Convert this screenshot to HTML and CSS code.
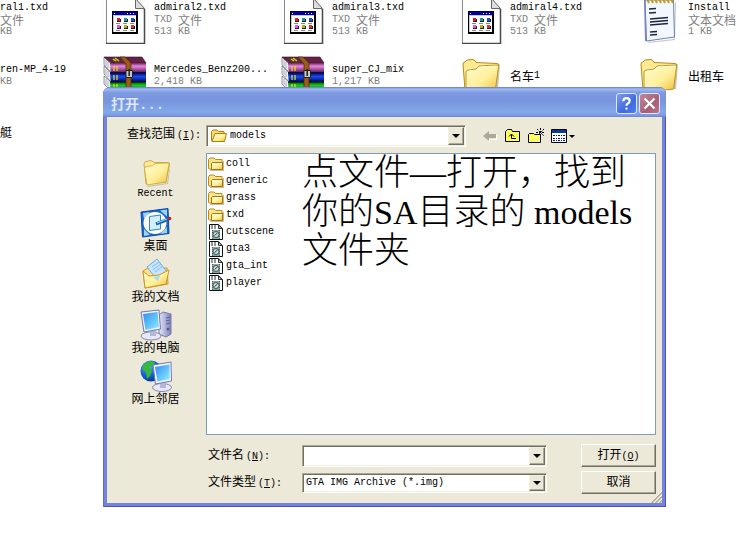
FILE: index.html
```html
<!DOCTYPE html>
<html lang="zh-CN">
<head>
<meta charset="utf-8">
<title>打开...</title>
<link rel="stylesheet" href="styles.css">
</head>
<body>
<svg class="sprite" aria-hidden="true">
  <defs>
    <linearGradient id="gold" x1="0" y1="0" x2="1" y2="1"><stop offset="0" stop-color="#fffbd0"/><stop offset=".55" stop-color="#fff09a"/><stop offset="1" stop-color="#f0bd38"/></linearGradient>
    <linearGradient id="screen" x1="0" y1="0" x2="1" y2="1"><stop offset="0" stop-color="#2f8cf0"/><stop offset="1" stop-color="#8ff0ff"/></linearGradient>
    <linearGradient id="purple" x1="0" y1="0" x2="0" y2="1"><stop offset="0" stop-color="#70205f"/><stop offset=".35" stop-color="#e68be0"/><stop offset="1" stop-color="#69205f"/></linearGradient>
    <linearGradient id="blue" x1="0" y1="0" x2="0" y2="1"><stop offset="0" stop-color="#000070"/><stop offset=".4" stop-color="#1550f0"/><stop offset="1" stop-color="#000058"/></linearGradient>
    <linearGradient id="green" x1="0" y1="0" x2="0" y2="1"><stop offset="0" stop-color="#005500"/><stop offset=".4" stop-color="#16d020"/><stop offset="1" stop-color="#004800"/></linearGradient>
    <linearGradient id="tower" x1="0" y1="0" x2="1" y2="0"><stop offset="0" stop-color="#e6e8fa"/><stop offset="1" stop-color="#7d80b8"/></linearGradient>
    <radialGradient id="globe" cx=".35" cy=".3" r=".8"><stop offset="0" stop-color="#66baff"/><stop offset=".5" stop-color="#1463d8"/><stop offset="1" stop-color="#062a80"/></radialGradient>
  </defs>
  <symbol id="i-txd" viewBox="0 0 48 48">
    <path fill="#fcfcfc" d="M0 0h48v48H0z"/>
    <path fill="#fff" stroke="#8a8a8a" d="M5.500 0V47.500H43.500V14L34 3V0z"/>
    <path fill="none" stroke="#4a4a4a" stroke-width="1.500" d="M5 47.500H43.500V13"/>
    <path fill="#ddd" stroke="#666" d="M34.500 2.500V12.500H43.500z"/>
    <path fill="#000" d="M11 15h26v23H11z"/><path fill="#c8c8c8" d="M12 19h23v17H12z"/><path fill="#fff" d="M13 20h22v16H13z"/>
    <path fill="#0000a8" d="M12 16h24v3H12z"/><path fill="#fff" d="M13 17h1v1h-1zM26 17h1v1h-1zM29 17h1v1h-1zM32 17h1v1h-1z"/>
    <path fill="#222" d="M16 23h4v3h-4zM23 23h4v3h-4zM30 23h4v3h-4zM16 30h4v3h-4zM23 30h4v3h-4zM30 30h4v3h-4z"/>
    <path fill="#e02020" d="M16 22h3v3h-3z"/><path fill="#10a0a0" d="M23 22h3v3h-3z"/><path fill="#2050e0" d="M30 22h3v3h-3z"/>
    <path fill="#f050e0" d="M16 29h3v3h-3z"/><path fill="#b0b010" d="M23 29h3v3h-3z"/><path fill="#e03030" d="M30 29h3v3h-3z"/>
    <path fill="#888" d="M15 27h4v1h-4zM22 27h4v1h-4zM29 27h4v1h-4zM15 34h4v1h-4zM22 34h4v1h-4zM29 34h4v1h-4z"/>
  </symbol>
  <symbol id="i-rar" viewBox="0 0 48 48">
    <path fill="#eef0f8" stroke="#555" stroke-width=".6" d="M3 5l7 7v8l-7-7zM3 14l7 7v9l-7-8zM3 24l7 6v9l-7-7z"/>
    <path stroke="#889" stroke-width=".6" d="M5 8v6M7 10v6M5 17v6M7 19v6M5 27v6M7 29v6"/>
    <path fill="#652046" stroke="#37102b" stroke-width=".6" d="M3 5h38l4 6H10z"/>
    <path fill="#4b3c18" d="M8 6h7l6 5h-6z"/><path stroke="#d8cc28" stroke-width="1.500" d="M12 7l3 2M14 6l4 3"/>
    <path fill="url(#purple)" d="M9 11h36v9H10z"/><path fill="url(#blue)" d="M9 21h36v9H10z"/><path fill="url(#green)" d="M9 30h36v9H10z"/>
    <path stroke="#111" d="M9 20.500h36M9 30h36M9 39h36"/>
    <path stroke="#f2e11a" stroke-width="1.200" d="M13 14v5M16 14v5M13 23v5M16 23v5M13 32v5M16 32v5"/>
    <path fill="#9a5c18" stroke="#4b2a08" stroke-width=".7" d="M19 5h5l6 6v28h-5V12z"/>
    <path fill="#c8c8c8" stroke="#222" d="M25 18.500h6.500v7H25z"/><path fill="none" stroke="#222" stroke-width="1.500" d="M28.200 17v7"/>
  </symbol>
  <symbol id="i-folder" viewBox="0 0 48 48">
    <path fill="#888" opacity=".5" d="M8 40l33-3 2-25-3 2z"/>
    <path fill="#ffeb91" stroke="#b98a18" d="M6 12q0-2 2-2l2-2 6-.5q2 .5 3 3l21 1q2 0 1.500 2L38 37 8 38z"/>
    <path fill="url(#gold)" stroke="#c69722" d="M9 20q0-2 3-2l7-1 3-3 18-1q2 0 1.500 2l-3 22L9 40z"/>
    <path fill="none" stroke="#fffce5" d="M10.500 21q0-2 3-2l7-1 3-3 16-.8"/>
  </symbol>
  <symbol id="i-note" viewBox="0 0 48 48">
    <path fill="#777" opacity=".4" d="M12 46l27-3 1-37 1 1-1 37-26 3z"/>
    <path fill="#f2f8ff" stroke="#6a7fb5" d="M10 4h28.500l1 37-28 4z"/>
    <path fill="#7a82c5" d="M9 4h1.500l1 41h-1.500z"/>
    <path stroke="#c99b18" stroke-width="2" d="M12 3l2 4M16 3l2 4M20 3l2 4M24 3l2 4M28 3l2 4M32 3l2 4M36 3l2 4"/>
    <path stroke="#1d2740" stroke-width="1.300" d="M14 13l7-.5M14 17l7-.5M15 23l18-1.500M15 26l18-1.500M15 29l18-1.500M15 36l7-.5M15 39l7-.5"/>
  </symbol>
  <symbol id="i-small-folder" viewBox="0 0 16 16">
    <path fill="#8a7a50" opacity=".5" d="M2 14h13V5h1v10H2z"/>
    <path fill="#fce48a" stroke="#c08a12" d="M.500 12.500V3.500L2 2h4l1.500 1.500H14V13H1z"/>
    <path fill="url(#gold)" stroke="#a87408" d="M3.500 13.500v-6l1-1h10v7z"/>
    <path stroke="#fffbe0" d="M5 7.500h9"/>
  </symbol>
  <symbol id="i-open-folder" viewBox="0 0 16 16">
    <path fill="#f9db76" stroke="#b57d0c" d="M.500 12.500V3.500L2 2h4l1.500 1.500H13V13H1z"/>
    <path fill="url(#gold)" stroke="#b57d0c" d="M1 13.500l3-8h11.500l-2 8z"/>
  </symbol>
  <symbol id="i-img" viewBox="0 0 16 16">
    <path fill="#fff" stroke="#111" d="M1.500.500h9l4 4v11h-13z"/>
    <path stroke="#333" d="M3 2h2M6 2h3M3 4h6" stroke-dasharray="2 1"/>
    <path fill="#ddd" stroke="#333" d="M10.500 1v3.500H14z"/>
    <path fill="#86aaa7" d="M4 6h8v9H4z"/>
    <path stroke="#456b68" stroke-dasharray="1 1" d="M4.500 6v9M11.500 6v9"/>
    <circle cx="8" cy="10.500" r="3" fill="#d5dddc" stroke="#3c5654"/><path stroke="#333" d="M6.500 11.500l3-2.500"/>
  </symbol>
  <symbol id="p-recent" viewBox="0 0 32 32">
    <path fill="#776" opacity=".35" d="M7 30l20-3 3-17v3l-2 15L8 31z"/>
    <path fill="#ffe996" stroke="#c99a28" stroke-width=".8" d="M4 8q0-2 2-2.500l5-1 3 2 14 0q1.500 0 1.500 1.500L26 26 6 28z"/>
    <path fill="url(#gold)" stroke="#d0a436" stroke-width=".8" d="M4.500 13q0-2 2-2.300l6-1 3-2.200 12.500-.5q1 0 .8 1.500L26 26 7 29z"/>
  </symbol>
  <symbol id="p-desktop" viewBox="0 0 32 32">
    <path fill="#1667cf" stroke="#0a49a4" d="M1 5l27-3.500 1 25L2.500 30z"/>
    <path fill="#9bd2fb" d="M3 6l7-1-6 7zM20 3.500l7-1v7zM4 22l6 6-6 1zM27 20v6l-7 1z"/>
    <ellipse cx="15" cy="16" rx="11.500" ry="11" fill="#fffbe4"/>
    <path fill="#d2efff" stroke="#2b84df" d="M9.500 9.500l11-1.500v14l-11 1.500z"/>
    <path stroke="#1665b4" stroke-width="3" d="M16 17l13-5"/><path stroke="#9bdcff" d="M17 16l10-4"/><circle cx="29.500" cy="11.500" r="1.800" fill="#bd2421"/>
  </symbol>
  <symbol id="p-documents" viewBox="0 0 32 32">
    <path fill="#ffe18a" stroke="#c99720" d="M3 13l5-3 19 0 1 16-23 4z"/>
    <path fill="#c4e5ff" stroke="#78a9db" d="M7 9l10-8 10 13-9 9z"/>
    <path stroke="#8cbbe4" d="M12 9l7-5M13 12l8-6M15 14l8-6"/>
    <path fill="url(#gold)" stroke="#cc9826" d="M3 13l6 5 10-1 10-5-3 14-21 4z"/>
    <path fill="#a6d8fa" d="M13 19l7-1-2 5z"/>
  </symbol>
  <symbol id="p-computer" viewBox="0 0 32 32">
    <path fill="url(#tower)" stroke="#777bb2" d="M19 6l4-3 8 2v20l-5 3-7-3z"/>
    <path stroke="#575e91" d="M26 9l4-1M26 12l4-1M26 15l4-1"/><circle cx="28" cy="20" r="1.500" fill="#555a89"/>
    <ellipse cx="11" cy="27" rx="10" ry="4" fill="#e8e9f8" stroke="#8588ae"/><path fill="#b4b7d9" d="M10 20h6v7h-6z"/>
    <path fill="#f0f2ff" stroke="#7479b3" d="M1 3l18-2 1.500 19L4 23z"/><path fill="url(#screen)" d="M3 5l14.500-2L19 18 5.500 21z"/>
  </symbol>
  <symbol id="p-network" viewBox="0 0 32 32">
    <circle cx="11" cy="11" r="10.500" fill="url(#globe)"/>
    <path fill="#38b836" d="M4 4l6-3 5 1-2 4-4 1 3 4-2 5-3 3-1-7-4-3zM15 6l5-1v6l-4 1z"/>
    <ellipse cx="22" cy="27.500" rx="9.500" ry="4" fill="#e8e9f8" stroke="#8588ae"/><path fill="#b4b7d9" d="M20 22h6v6h-6z"/>
    <path fill="#f0f2ff" stroke="#7479b3" d="M13 5l18-3 .5 19-16 3z"/><path fill="url(#screen)" d="M15 7l14.500-2.500V19l-12 2.500z"/>
  </symbol>
</svg>

<main class="desktop">
  <div class="file cut"><p class="name">ral1.txd</p><p class="meta"><b>文件</b></p><p class="meta">KB</p></div>
  <div class="file"><svg><use href="#i-txd"/></svg><div><p class="name">admiral2.txd</p><p class="meta">TXD <b>文件</b></p><p class="meta">513 KB</p></div></div>
  <div class="file"><svg><use href="#i-txd"/></svg><div><p class="name">admiral3.txd</p><p class="meta">TXD <b>文件</b></p><p class="meta">513 KB</p></div></div>
  <div class="file"><svg><use href="#i-txd"/></svg><div><p class="name">admiral4.txd</p><p class="meta">TXD <b>文件</b></p><p class="meta">513 KB</p></div></div>
  <div class="file"><svg><use href="#i-note"/></svg><div><p class="name">Install</p><p class="meta"><b>文本文档</b></p><p class="meta">1 KB</p></div></div>

  <div class="file cut"><p class="name">ren-MP_4-19</p><p class="meta">KB</p></div>
  <div class="file"><svg><use href="#i-rar"/></svg><div><p class="name">Mercedes_Benz200...</p><p class="meta">2,418 KB</p></div></div>
  <div class="file"><svg><use href="#i-rar"/></svg><div><p class="name">super_CJ_mix</p><p class="meta">1,217 KB</p></div></div>
  <div class="file"><svg><use href="#i-folder"/></svg><p class="name"><b>名车</b>1</p></div>
  <div class="file"><svg><use href="#i-folder"/></svg><p class="name"><b>出租车</b></p></div>

  <div class="file cut"><p class="name"><b>艇</b></p></div>
</main>

<section class="dialog" role="dialog" aria-labelledby="title">
  <header class="titlebar">
    <h1 id="title">打开<span>...</span></h1>
    <button class="cap help" type="button" aria-label="帮助"><svg viewBox="0 0 21 21"><path d="M7 8q0-3.500 3.500-3.500T14 7.500q0 2-2 3-1.500 1-1.500 2.500" /><path d="M10.500 15v2.200"/></svg></button>
    <button class="cap close" type="button" aria-label="关闭"><svg viewBox="0 0 21 21"><path d="M5 5l11 11M16 5L5 16"/></svg></button>
  </header>
  <form class="body">
    <div class="look">
      <label for="look"><b>查找范围</b>(<u>I</u>):</label>
      <div class="combo">
        <svg class="s16"><use href="#i-open-folder"/></svg>
        <select id="look"><option>models</option></select>
        <span class="arrow"></span>
      </div>
      <div class="tools">
        <button type="button" aria-label="后退"><svg class="s16" viewBox="0 0 16 16"><path fill="#fff" d="M3 9l5 6v-3h7V7h-1v4H7z"/><path fill="#aca899" d="M1 8l6-5v3h7v4H7v3z"/></svg></button>
        <button type="button" aria-label="向上一级"><svg class="s16" viewBox="0 0 16 16"><path fill="#ffff63" stroke="#000" d="M.500 13.500V3.500l2-2h4l1 2h7v10z"/><path fill="none" stroke="#000" d="M11 10.500H6.500V6M4 8.500l2.500-2.500L9 8.500"/></svg></button>
        <button type="button" aria-label="新建文件夹"><svg class="s16" viewBox="0 0 16 16"><path fill="#ffff63" stroke="#000" d="M.500 14.500V6.500l1-1h4l1 1h6v8z"/><path stroke="#000" stroke-dasharray="2 1" d="M12.500 0v9M8 4.500h8M9 1l7 7M16 1l-6 6"/></svg></button>
        <button type="button" class="views" aria-label="查看"><svg viewBox="0 0 24 16"><path fill="#fff" stroke="#000" d="M.500 1.500h15v13H.500z"/><path fill="#0a3a96" d="M1 2h14v3H1z"/><path stroke="#11117a" stroke-dasharray="2 1 1 1" d="M2 7.500h13M2 10.500h13M2 12.500h13"/><path d="M18 7h6l-3 3z"/></svg></button>
      </div>
    </div>
    <div class="middle">
      <nav class="places">
        <a href="#"><svg><use href="#p-recent"/></svg>Recent</a>
        <a href="#"><svg><use href="#p-desktop"/></svg><b>桌面</b></a>
        <a href="#"><svg><use href="#p-documents"/></svg><b>我的文档</b></a>
        <a href="#"><svg><use href="#p-computer"/></svg><b>我的电脑</b></a>
        <a href="#"><svg><use href="#p-network"/></svg><b>网上邻居</b></a>
      </nav>
      <div class="right">
        <div class="list">
          <ul>
            <li><svg class="s16"><use href="#i-small-folder"/></svg>coll</li>
            <li><svg class="s16"><use href="#i-small-folder"/></svg>generic</li>
            <li><svg class="s16"><use href="#i-small-folder"/></svg>grass</li>
            <li><svg class="s16"><use href="#i-small-folder"/></svg>txd</li>
            <li><svg class="s16"><use href="#i-img"/></svg>cutscene</li>
            <li><svg class="s16"><use href="#i-img"/></svg>gta3</li>
            <li><svg class="s16"><use href="#i-img"/></svg>gta_int</li>
            <li><svg class="s16"><use href="#i-img"/></svg>player</li>
          </ul>
          <p class="note">点文件—打开，找到<br>你的<span>SA</span>目录的<span> models</span><br>文件夹</p>
        </div>
        <div class="fields">
          <label for="fname"><b>文件名</b>(<u>N</u>):</label>
          <div class="combo"><input id="fname" type="text"><span class="arrow"></span></div>
          <button class="push" type="submit"><b>打开</b>(<u>O</u>)</button>
          <label for="ftype"><b>文件类型</b>(<u>T</u>):</label>
          <div class="combo short"><select id="ftype"><option>GTA IMG Archive (*.img)</option></select><span class="arrow"></span></div>
          <button class="push" type="button"><b>取消</b></button>
        </div>
      </div>
    </div>
  </form>
  <svg class="grip" viewBox="0 0 12 12"><path stroke="#fff" d="M0 12L12 0M4 12l8-8M8 12l4-4"/><path stroke="#aca899" stroke-width="1.500" d="M1.500 12L12 1.500M5.500 12L12 5.500M9.500 12L12 9.500"/></svg>
</section>
</body>
</html>
```
FILE: styles.css
```css
* { box-sizing: border-box; }
body {
  margin: 0;
  min-height: 100vh;
  position: relative;
  overflow: hidden;
  background: #fff;
  color: #000;
  font: 10px/12px "Liberation Mono", "Noto Sans CJK SC", monospace;
}
p, h1, ul { margin: 0; padding: 0; }
b { font: 12px/12px "Noto Sans CJK SC", sans-serif; }
svg { display: block; flex: none; }
button, input, select { font: inherit; color: inherit; margin: 0; }
.sprite { position: absolute; width: 0; height: 0; }
.s16 { width: 16px; height: 16px; }

.desktop {
  display: grid;
  grid-template-columns: 101px repeat(3, 178px) minmax(0, 1fr);
  grid-auto-rows: 56px;
  margin-top: -8px;
}
.file { display: flex; align-items: center; gap: 5px; white-space: nowrap; }
.file svg { width: 48px; height: 48px; }
.file p { display: flex; align-items: center; height: 12px; white-space: pre; }
.file.cut { flex-direction: column; justify-content: center; align-items: flex-start; gap: 0; }
.meta { color: #808080; }

.dialog {
  position: absolute;
  left: 103px;
  top: 87px;
  width: 563px;
  padding: 0 4px 4px;
  border-radius: 7px 7px 0 0;
  background: #7384de;
  box-shadow: inset 1px 0 #5f6bd0, inset -1px -1px #4f4fb4;
}
.titlebar {
  display: flex;
  align-items: center;
  gap: 2px;
  height: 30px;
  margin: 0 -4px;
  padding: 3px 6px 0 8px;
  border-radius: 7px 7px 0 0;
  background: linear-gradient(#6577c8 0, #a2bbf4 2px, #7c98e0 6px, #7994dd 14px, #82a8ea 25px, #7a96df 29px, #6678ce 30px);
}
.titlebar h1 { flex: 1; color: #dce6fb; font: bold 14px/20px "Noto Sans CJK SC", sans-serif; }
.titlebar span { font-family: "Liberation Mono", monospace; }
.cap { width: 21px; height: 21px; padding: 0; border: 1px solid #dde6fb; border-radius: 3px; }
.cap svg { width: 19px; height: 19px; fill: none; stroke: #fff; stroke-width: 2.5; }
.help { background: linear-gradient(135deg, #7b9df0, #3f6ae0 60%, #4e80f0); }
.close { background: linear-gradient(135deg, #c08a9c, #a85f74 60%, #b87484); }

.body { padding: 8px 6px 9px 0; background: #ece9d8; }
.look { display: flex; align-items: center; height: 22px; }
.look label { width: 99px; padding-left: 20px; padding-bottom: 4px; }
label b { margin-right: 2px; }
.look .combo { width: 260px; }
.combo {
  display: flex;
  align-items: center;
  height: 22px;
  background: #fff;
  border: 1px solid;
  border-color: #aca899 #fff #fff #aca899;
  box-shadow: inset 1px 1px #716f64, inset -1px -1px #f1efe2;
}
.combo .s16 { margin-left: 4px; }
.combo.short { height: 20px; }
.combo select, .combo input {
  flex: 1;
  min-width: 0;
  height: 16px;
  padding: 0 3px;
  border: 0;
  outline: 0;
  background: transparent;
  appearance: none;
}
.arrow {
  display: grid;
  place-items: center;
  align-self: stretch;
  width: 16px;
  margin: 1px;
  background: #ece9d8;
  border: 1px solid;
  border-color: #f1efe2 #716f64 #716f64 #f1efe2;
  box-shadow: inset -1px -1px #aca899;
}
.arrow::before { content: ""; border: 4px solid transparent; border-top-color: #000; border-bottom: 0; }
.tools { display: flex; gap: 7px; margin-left: 16px; }
.tools button { padding: 0; border: 0; background: none; }
.views svg { width: 24px; height: 16px; }

.middle { display: flex; margin-top: 6px; }
.places { width: 97px; margin-right: 2px; padding-top: 3px; flex: none; }
.places a {
  display: flex;
  flex-direction: column;
  align-items: center;
  height: 51px;
  color: #000;
  text-decoration: none;
}
.places svg { width: 32px; height: 32px; }
.right { flex: 1; }
.list { position: relative; height: 282px; padding: 1px; background: #fff; border: 1px solid #7f9db9; }
.list li { display: flex; align-items: center; gap: 2px; height: 17px; }
.note {
  position: absolute;
  left: 95px;
  top: 0;
  white-space: nowrap;
  font: 300 36px/39px "Liberation Serif", "Noto Sans CJK SC", serif;
}
.note span { font-size: 34px; }
.fields {
  display: grid;
  grid-template-columns: 94px 245px 1fr;
  grid-auto-rows: 23px;
  align-items: center;
  row-gap: 4px;
  padding: 9px 0 0 2px;
}
.push {
  justify-self: end;
  width: 75px;
  height: 23px;
  padding: 0;
  background: #ece9d8;
  border: 1px solid;
  border-color: #fff #716f64 #716f64 #fff;
  box-shadow: inset -1px -1px #aca899;
}
.grip { position: absolute; right: 4px; bottom: 4px; width: 12px; height: 12px; }
```
